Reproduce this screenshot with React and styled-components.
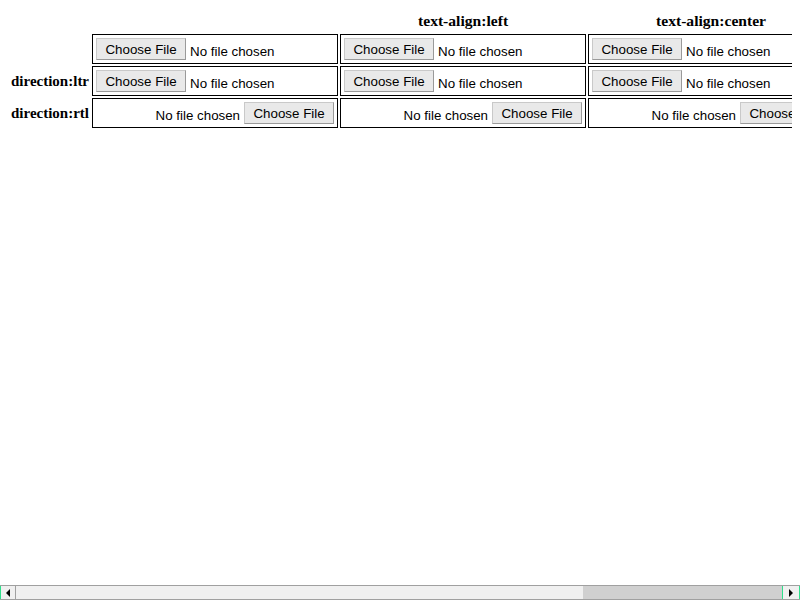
import React from 'react';
import styled, { createGlobalStyle } from 'styled-components';

const Global = createGlobalStyle`
  html { overflow: hidden; background: #fff; }
  body { margin: 8px; font-family: "Liberation Serif", "Times New Roman", serif; color: #000; }
`;

const Table = styled.table`
  border-collapse: separate;
  border-spacing: 2px;
  table-layout: auto;
`;

const HeadCell = styled.th`
  font-family: "Liberation Serif", "Times New Roman", serif;
  font-weight: bold;
  font-size: ${p => p.$size || 15}px;
  padding: 1px;
  height: 20px;
  text-align: center;
  vertical-align: middle;
  white-space: nowrap;
`;

const Cell = styled.td`
  border: 1px solid #000;
  padding: 1px;
  text-align: ${p => p.$align || 'start'};
`;

const FileInput = styled.div`
  direction: ${p => p.$dir};
  display: flex;
  align-items: flex-end;
  gap: 4px;
  width: 238px;
  height: 22px;
  margin: 2px;
  font: 13.333px "Liberation Sans", Arial, sans-serif;
  white-space: nowrap;
  overflow: hidden;
`;

const PickButton = styled.span`
  flex: none;
  box-sizing: border-box;
  width: 90px;
  height: 22px;
  display: flex;
  align-items: center;
  justify-content: center;
  background: #e9e9e9;
  border: 1px solid #c9c9c9;
  border-right-color: #9a9a9a;
  border-bottom-color: #9a9a9a;
  color: #000;
  line-height: 15px;
`;

const FileLabel = styled.span`
  line-height: 15px;
  padding-bottom: 1px;
  color: #000;
`;

const ScrollBar = styled.div`
  position: fixed;
  left: 0;
  right: 0;
  bottom: 0;
  height: 15px;
  box-sizing: border-box;
  display: flex;
  background: #f0f0f0;
  border-top: 1px solid #a0a0a0;
  border-bottom: 1px solid #a0a0a0;
`;

const ArrowButton = styled.div`
  flex: none;
  width: ${p => p.$w}px;
  box-sizing: border-box;
  display: flex;
  align-items: center;
  justify-content: center;
  background: #f0f0f0;
  border-left: 1px solid ${p => p.$accent ? '#2fe08c' : '#a0a0a0'};
  border-right: 1px solid ${p => p.$rightAccent ? '#2fe08c' : '#a0a0a0'};
`;

const Track = styled.div`
  flex: 1;
  display: flex;
`;

const Spacer = styled.div`
  flex: 1;
`;

const Thumb = styled.div`
  flex: none;
  width: 199px;
  background: #d0d0d0;
`;

const Arrow = ({ dir }) => (
  <svg width="5" height="8" viewBox="0 0 5 8">
    {dir === 'left'
      ? <polygon points="4,0 4,8 0,4" fill="#000" />
      : <polygon points="0,0 0,8 4,4" fill="#000" />}
  </svg>
);

const columns = [
  { key: 'default', title: '', align: undefined },
  { key: 'left', title: 'text-align:left', align: 'left' },
  { key: 'center', title: 'text-align:center', align: 'center' },
  { key: 'right', title: 'text-align:right', align: 'right' },
];

const rows = [
  { label: '', dir: 'ltr' },
  { label: 'direction:ltr', dir: 'ltr' },
  { label: 'direction:rtl', dir: 'rtl' },
];

const FakeFile = ({ dir }) => (
  <FileInput $dir={dir}>
    <PickButton>Choose File</PickButton>
    <FileLabel>No file chosen</FileLabel>
  </FileInput>
);

export default function App() {
  return (
    <>
      <Global />
      <Table>
        <thead>
          <tr>
            <HeadCell />
            {columns.map(c => (
              <HeadCell key={c.key} $size={15.6}>{c.title}</HeadCell>
            ))}
          </tr>
        </thead>
        <tbody>
          {rows.map((r, i) => (
            <tr key={i}>
              <HeadCell $size={15}>{r.label}</HeadCell>
              {columns.map(c => (
                <Cell key={c.key} $align={c.align}>
                  <FakeFile dir={r.dir} />
                </Cell>
              ))}
            </tr>
          ))}
        </tbody>
      </Table>
      <ScrollBar>
        <ArrowButton $w={16} $accent>
          <Arrow dir="left" />
        </ArrowButton>
        <Track>
          <Spacer />
          <Thumb />
        </Track>
        <ArrowButton $w={18} $accent $rightAccent>
          <Arrow dir="right" />
        </ArrowButton>
      </ScrollBar>
    </>
  );
}
